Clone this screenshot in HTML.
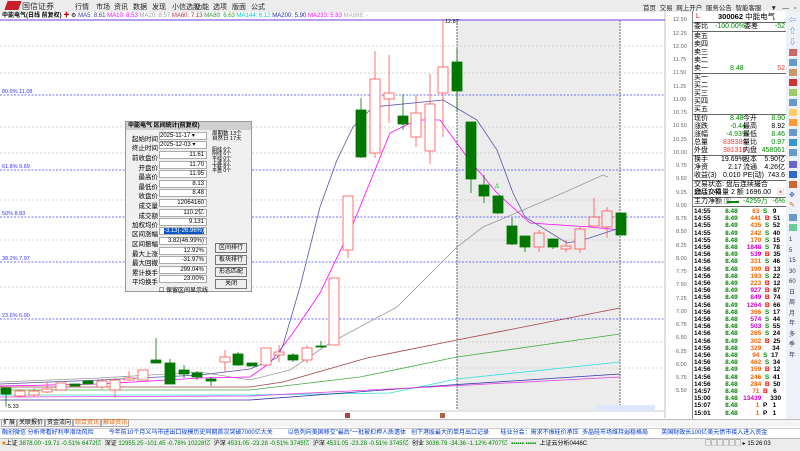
<!DOCTYPE html>
<html><head><meta charset="utf-8"><style>
*{margin:0;padding:0;box-sizing:border-box}
body{width:800px;height:451px;overflow:hidden;background:#fff;font-family:"Liberation Sans","Noto Sans CJK SC",sans-serif;font-size:7px;position:relative;color:#000}
.a{position:absolute;white-space:nowrap}
#top{position:absolute;left:0;top:0;width:800px;height:12px;background:#ececec}
#rp{position:absolute;left:692px;top:11px;width:94px;height:408px;background:#fff;border-left:1px solid #888;overflow:hidden}
.r{position:absolute;left:0;width:94px;height:8px;line-height:8px;font-size:7px}
.r span{position:absolute}
.sep{position:absolute;left:0;width:94px;border-top:1px solid #666}
#tb{position:absolute;left:786px;top:11px;width:14px;height:408px;background:#eef2f8}
.ic{position:absolute;left:3px;width:8px;height:7px}
#dlg{position:absolute;left:125px;top:121px;width:127px;height:171px;background:#f0f0f0;border:1px solid #999}
.lb{position:absolute;left:4px;width:28px;text-align:right;font-size:6.5px}
.fd{position:absolute;left:33px;width:48px;height:8px;background:#fff;border:1px solid #aaa;font-size:6px;text-align:right;padding-right:2px;line-height:7px}
.bt{position:absolute;left:89px;width:32px;height:10px;border:1px solid #777;background:#eee;font-size:6px;text-align:center;line-height:9px}
.nv{position:absolute;top:2px;font-size:7px;color:#222}
</style></head><body>
<div id="top"></div>
<div class="a" style="left:6px;top:1px;width:14px;height:9px;background:#c8202a;transform:skewX(-20deg)"></div>
<div class="a" style="left:22px;top:1px;font-size:8px;color:#333">国信证券</div>
<span class="nv" style="left:75px">行情</span><span class="nv" style="left:96px">市场</span><span class="nv" style="left:114px">资讯</span><span class="nv" style="left:133px">数据</span><span class="nv" style="left:152px">发现</span><span class="nv" style="left:172px">小信选股</span><span class="nv" style="left:195px">功能</span><span class="nv" style="left:213px">选项</span><span class="nv" style="left:232px">版面</span><span class="nv" style="left:251px">公式</span>
<div class="a" style="left:643px;top:2px;font-size:6.5px;color:#222">首页&nbsp; 交易&nbsp; 网上开户&nbsp; 服务公告&nbsp; 智能客服&nbsp;&nbsp;&nbsp;&nbsp; ▼&nbsp;&nbsp; —&nbsp;&nbsp; ▫&nbsp;&nbsp; ✕</div>
<div class="a" style="left:2px;top:13px;font-size:6px;line-height:6px"><b>中能电气(日线 前复权)</b> <span style="color:#c00">✚</span> ⚙ <span style="color:#333399">MA5: 8.61</span> <span style="color:#f0f">MA10: 8.53</span> <span style="color:#999">MA20: 8.57</span> <span style="color:#a33">MA60: 7.13</span> <span style="color:#393">MA89: 6.63</span> <span style="color:#0cc">MA144: 6.12</span> <span style="color:#229">MA200: 5.90</span> <span style="color:#f0f">MA233: 5.83</span> <span style="color:#aaa">MA888: -</span></div>

<svg class="a" style="left:0;top:0" width="692" height="420" viewBox="0 0 692 420">
<rect x="457" y="20" width="163" height="390" fill="#ececec"/>
<line x1="457" y1="20" x2="457" y2="410" stroke="#666" stroke-dasharray="2,1"/>
<line x1="620" y1="20" x2="620" y2="410" stroke="#666" stroke-dasharray="2,1"/>
<g stroke="#c8c8c8" stroke-dasharray="2,2" stroke-width="0.7">
<line x1="0" y1="46" x2="665" y2="46"/><line x1="0" y1="73" x2="665" y2="73"/><line x1="0" y1="127" x2="665" y2="127"/><line x1="0" y1="153" x2="665" y2="153"/><line x1="0" y1="200" x2="665" y2="200"/><line x1="0" y1="240" x2="665" y2="240"/><line x1="0" y1="287" x2="665" y2="287"/><line x1="0" y1="342" x2="665" y2="342"/><line x1="0" y1="368" x2="665" y2="368"/></g>
<g stroke="#4444ff" stroke-dasharray="2,1.5" stroke-width="0.8">
<line x1="0" y1="95" x2="665" y2="95"/><line x1="0" y1="170" x2="665" y2="170"/><line x1="0" y1="217" x2="665" y2="217"/><line x1="0" y1="262" x2="665" y2="262"/><line x1="0" y1="319" x2="665" y2="319"/></g>
<g font-size="5.5" fill="#3333ff" font-family="Liberation Sans">
<text x="2" y="93">80.9% 11.08</text><text x="2" y="168">61.8% 9.69</text><text x="2" y="215">50% 8.83</text><text x="2" y="260">38.2% 7.97</text><text x="2" y="317">23.6% 6.90</text></g>
<line x1="0" y1="20" x2="665" y2="20" stroke="#8866ee" stroke-width="1.2"/>
<line x1="665" y1="12" x2="665" y2="418" stroke="#999" stroke-width="0.6"/>
<g fill="none" stroke-width="0.8">
<polyline stroke="#999" points="0,382 100,378 200,372 250,380 290,370 330,343 397,307 437,267 457,247 483,227 523,210 563,193 603,175 608,177"/>
<polyline stroke="#f0f" points="0,386 100,384 200,378 250,377 270,363 293,333 320,293 353,224 390,133 417,120 440,120 467,157 497,193 530,223 590,227 620,230"/>
<polyline stroke="#5555aa" points="0,384 100,380 200,375 250,369 277,358 283,345 300,287 320,207 337,160 353,127 373,107 443,100 477,120 497,150 513,193 525,217 567,243 583,240 620,228"/>
<polyline stroke="#a04040" points="0,387 250,387 283,382 367,358 457,340 620,308"/>
<polyline stroke="#44aa44" points="0,390 250,390 360,377 457,357 620,334"/>
<polyline stroke="#33dddd" points="0,395 250,395 390,393 457,379 620,362"/>
<polyline stroke="#3333aa" points="0,400 250,400 450,385 620,374"/>
<polyline stroke="#e040e0" points="0,397 250,396 450,386 620,377"/>
</g>
<g stroke="#ff5050" fill="none" stroke-width="0.8">
<line x1="20" y1="389" x2="20" y2="398"/><line x1="34" y1="388" x2="34" y2="397"/><line x1="47" y1="382" x2="47" y2="393"/><line x1="102" y1="379" x2="102" y2="389"/><line x1="115" y1="378" x2="115" y2="398"/><line x1="129" y1="371" x2="129" y2="381"/><line x1="225" y1="350" x2="225" y2="372"/><line x1="279" y1="345" x2="279" y2="362"/><line x1="307" y1="345" x2="307" y2="363"/><line x1="348" y1="250" x2="348" y2="258"/><line x1="375" y1="51" x2="375" y2="158"/><line x1="389" y1="55" x2="389" y2="123"/><line x1="416" y1="95" x2="416" y2="147"/><line x1="430" y1="74" x2="430" y2="164"/><line x1="443" y1="20" x2="443" y2="137"/><line x1="539" y1="230" x2="539" y2="252"/><line x1="566" y1="240" x2="566" y2="252"/><line x1="580" y1="227" x2="580" y2="253"/><line x1="594" y1="198" x2="594" y2="226"/><line x1="607" y1="207" x2="607" y2="238"/>
<rect x="15" y="391" width="10" height="5" fill="#fff"/><rect x="29" y="391" width="10" height="4" fill="#fff"/><rect x="42" y="389" width="10" height="3" fill="#fff"/><rect x="56" y="383" width="10" height="7" fill="#fff"/><rect x="97" y="381" width="10" height="6" fill="#fff"/><rect x="110" y="380" width="10" height="10" fill="#fff"/><rect x="124" y="378" width="10" height="2" fill="#fff"/><rect x="138" y="370" width="10" height="10" fill="#fff"/><rect x="220" y="357" width="10" height="5" fill="#fff"/><rect x="261" y="348" width="10" height="17" fill="#fff"/><rect x="274" y="352" width="10" height="3" fill="#fff"/><rect x="302" y="348" width="10" height="12" fill="#fff"/><rect x="329" y="278" width="10" height="67" fill="#fff"/><rect x="343" y="196" width="10" height="54" fill="#fff"/><rect x="370" y="79" width="10" height="74" fill="#fff"/><rect x="384" y="93" width="10" height="6" fill="#fff"/><rect x="411" y="113" width="10" height="24" fill="#fff"/><rect x="425" y="104" width="10" height="47" fill="#fff"/><rect x="438" y="67" width="10" height="26" fill="#fff"/><rect x="534" y="233" width="10" height="14" fill="#ececec"/><rect x="561" y="246" width="10" height="3" fill="#ececec"/><rect x="575" y="229" width="10" height="20" fill="#ececec"/><rect x="589" y="217" width="10" height="9" fill="#ececec"/><rect x="602" y="211" width="10" height="16" fill="#ececec"/>
</g>
<g stroke="#007800" fill="#007800" stroke-width="0.8">
<line x1="6" y1="388" x2="6" y2="407"/><line x1="156" y1="338" x2="156" y2="363"/><line x1="170" y1="359" x2="170" y2="384"/><line x1="184" y1="365" x2="184" y2="378"/><line x1="197" y1="371" x2="197" y2="380"/><line x1="211" y1="377" x2="211" y2="386"/><line x1="238" y1="352" x2="238" y2="366"/><line x1="293" y1="353" x2="293" y2="362"/><line x1="321" y1="341" x2="321" y2="348"/><line x1="361" y1="98" x2="361" y2="158"/><line x1="403" y1="94" x2="403" y2="130"/><line x1="457" y1="49" x2="457" y2="111"/><line x1="471" y1="122" x2="471" y2="193"/><line x1="484" y1="175" x2="484" y2="203"/><line x1="498" y1="196" x2="498" y2="214"/><line x1="512" y1="218" x2="512" y2="245"/><line x1="525" y1="236" x2="525" y2="252"/><line x1="553" y1="239" x2="553" y2="249"/>
<rect x="1" y="388" width="10" height="6"/><rect x="70" y="384" width="10" height="2"/><rect x="83" y="381" width="10" height="3"/><rect x="151" y="360" width="10" height="3"/><rect x="165" y="363" width="10" height="21"/><rect x="179" y="370" width="10" height="4"/><rect x="192" y="373" width="10" height="4"/><rect x="206" y="379" width="10" height="2"/><rect x="233" y="354" width="10" height="11"/><rect x="247" y="363" width="10" height="3"/><rect x="288" y="355" width="10" height="5"/><rect x="316" y="346" width="10" height="1"/><rect x="356" y="110" width="10" height="47"/><rect x="398" y="116" width="10" height="8"/><rect x="452" y="62" width="10" height="29"/><rect x="466" y="122" width="10" height="57"/><rect x="479" y="185" width="10" height="11"/><rect x="493" y="196" width="10" height="17"/><rect x="507" y="226" width="10" height="18"/><rect x="520" y="236" width="10" height="11"/><rect x="548" y="239" width="10" height="8"/><rect x="616" y="213" width="10" height="22"/>
</g>
<text x="445" y="23" font-size="5.5" fill="#000">12.87</text>
<text x="8" y="408" font-size="5.5" fill="#000">5.33</text>
<text x="495" y="188" font-size="6" fill="#2c2">Δ</text>
<g font-size="5.5" fill="#666" font-family="Liberation Sans">
<text x="673" y="21">12.50</text><text x="673" y="35">12.25</text><text x="673" y="48">12.00</text><text x="673" y="61">11.75</text><text x="673" y="74">11.50</text><text x="673" y="88">11.25</text><text x="673" y="101">11.00</text><text x="673" y="114">10.75</text><text x="673" y="127">10.50</text><text x="673" y="141">10.25</text><text x="673" y="154">10.00</text><text x="676" y="167">9.75</text><text x="676" y="180">9.50</text><text x="676" y="194">9.25</text><text x="676" y="207">9.00</text><text x="676" y="220">8.75</text><text x="676" y="233">8.50</text><text x="676" y="247">8.25</text><text x="676" y="260">8.00</text><text x="676" y="273">7.75</text><text x="676" y="286">7.50</text><text x="676" y="300">7.25</text><text x="676" y="313">7.00</text><text x="676" y="326">6.75</text><text x="676" y="339">6.50</text><text x="676" y="353">6.25</text><text x="676" y="366">6.00</text><text x="676" y="379">5.75</text><text x="676" y="392">5.50</text></g>
<line x1="0" y1="411" x2="665" y2="411" stroke="#999" stroke-width="0.6"/>
<rect x="345" y="413" width="5" height="5" fill="#a44"/>
<rect x="440" y="413" width="5" height="5" fill="#a64"/>
<rect x="595" y="405" width="60" height="6" fill="#dde8ff"/>
</svg>

<div id="dlg">
<div class="a" style="left:0;top:0;width:125px;height:8px;background:#cfcfcf;font-size:6px;line-height:8px;padding-left:2px"><b>中能电气 区间统计(前复权)</b></div>
<div class="lb" style="top:11px">起始时间</div><div class="fd" style="top:10px;text-align:left">2025-11-17 ▾</div>
<div class="lb" style="top:20px">终止时间</div><div class="fd" style="top:19px;text-align:left">2025-12-03 ▾</div>
<div class="lb" style="top:30px">前收盘价</div><div class="fd" style="top:29px">11.61</div>
<div class="lb" style="top:40px">开盘价</div><div class="fd" style="top:39px">11.70</div>
<div class="lb" style="top:49px">最高价</div><div class="fd" style="top:48px">11.95</div>
<div class="lb" style="top:59px">最低价</div><div class="fd" style="top:58px">8.13</div>
<div class="lb" style="top:68px">收盘价</div><div class="fd" style="top:67px">8.48</div>
<div class="lb" style="top:78px">成交量</div><div class="fd" style="top:77px">12064160</div>
<div class="lb" style="top:88px">成交额</div><div class="fd" style="top:87px">110.2亿</div>
<div class="lb" style="top:97px">加权均价</div><div class="fd" style="top:96px">9.131</div>
<div class="lb" style="top:106px">区间涨幅</div><div class="fd" style="top:105px;background:#fff"><span style="background:#0a56c8;color:#fff">-3.13(-26.96%)</span></div>
<div class="lb" style="top:116px">区间振幅</div><div class="fd" style="top:115px">3.82(46.99%)</div>
<div class="lb" style="top:126px">最大上涨</div><div class="fd" style="top:125px">12.92%</div>
<div class="lb" style="top:135px">最大回撤</div><div class="fd" style="top:134px">-31.97%</div>
<div class="lb" style="top:145px">累计换手</div><div class="fd" style="top:144px">299.04%</div>
<div class="lb" style="top:154px">平均换手</div><div class="fd" style="top:153px">23.00%</div>
<div class="a" style="left:33px;top:163px;font-size:6px">☐ 保留区间显示线</div>
<div class="a" style="left:86px;top:10px;font-size:5.5px;line-height:5px">周期数 13个<br>自然日 17天</div>
<div class="a" style="left:86px;top:26px;font-size:5px;line-height:4.3px">阳线 6个<br>阴线 6个<br>平线 0个<br>上涨 5个<br>下跌 8个<br>平盘 0个</div>
<div class="bt" style="top:121px">区间排行</div>
<div class="bt" style="top:133px">板块排行</div>
<div class="bt" style="top:145px">形态匹配</div>
<div class="bt" style="top:157px">关闭</div>
</div>

<div id="rp">
<div class="r" style="top:1px;height:10px;line-height:10px"><span style="left:3px;color:#f00">L</span><span style="left:25px;font-size:7.5px"><b>300062</b> 中能电气</span></div>
<div class="sep" style="top:11px"></div>
<div class="r" style="top:12px"><span style="left:1px">委比</span><span style="left:22px;color:#080">-100.00%</span><span style="left:51px">委差</span><span style="right:2px;color:#080">-52</span></div>
<div class="sep" style="top:20px"></div>
<div class="r" style="top:22px"><span style="left:1px">卖五</span></div>
<div class="r" style="top:30px"><span style="left:1px">卖四</span></div>
<div class="r" style="top:38px"><span style="left:1px">卖三</span></div>
<div class="r" style="top:46px"><span style="left:1px">卖二</span></div>
<div class="r" style="top:54px"><span style="left:1px">卖一</span><span style="left:37px;color:#080">8.48</span><span style="right:2px;color:#f33">52</span></div>
<div class="sep" style="top:62px"></div>
<div class="r" style="top:63px"><span style="left:1px">买一</span></div>
<div class="r" style="top:71px"><span style="left:1px">买二</span></div>
<div class="r" style="top:79px"><span style="left:1px">买三</span></div>
<div class="r" style="top:87px"><span style="left:1px">买四</span></div>
<div class="r" style="top:95px"><span style="left:1px">买五</span></div>
<div class="sep" style="top:103px"></div>
<div class="r" style="top:104px"><span style="left:1px">现价</span><span style="left:37px;color:#080">8.48</span><span style="left:50px">今开</span><span style="right:2px;color:#080">8.90</span></div>
<div class="r" style="top:112px"><span style="left:1px">涨跌</span><span style="left:37px;color:#080">-0.44</span><span style="left:50px">最高</span><span style="right:2px">8.92</span></div>
<div class="r" style="top:120px"><span style="left:1px">涨幅</span><span style="left:33px;color:#080">-4.93%</span><span style="left:50px">最低</span><span style="right:2px;color:#080">8.46</span></div>
<div class="r" style="top:128px"><span style="left:1px">总量</span><span style="left:30px;color:#f33">839380</span><span style="left:50px">量比</span><span style="right:2px;color:#080">0.97</span></div>
<div class="r" style="top:136px"><span style="left:1px">外盘</span><span style="left:30px;color:#f33">381319</span><span style="left:50px">内盘</span><span style="right:2px;color:#080">458061</span></div>
<div class="sep" style="top:144px"></div>
<div class="r" style="top:145px"><span style="left:1px">换手</span><span style="left:28px">19.69%</span><span style="left:50px">股本</span><span style="right:2px">5.90亿</span></div>
<div class="r" style="top:153px"><span style="left:1px">净资</span><span style="left:35px">2.17</span><span style="left:50px">流通</span><span style="right:2px">4.26亿</span></div>
<div class="r" style="top:161px"><span style="left:1px">收益(3)</span><span style="left:30px">0.010</span><span style="left:50px">PE(动)</span><span style="right:2px">743.6</span></div>
<div class="sep" style="top:169px"></div>
<div class="r" style="top:170px"><span style="left:1px">交易状态: 盘后连续撮合 15:17:45</span></div>
<div class="r" style="top:178px"><span style="left:1px">盘后交易量 2 额 1696.00</span><span style="right:3px;color:#e66">▣</span></div>
<div class="sep" style="top:186px"></div>
<div class="r" style="top:187px"><span style="left:1px">主力净额 ▥</span><span style="left:34px;top:3px;width:12px;height:2px;background:#080"></span><span style="left:50px;color:#080">-4259万</span><span style="right:2px;color:#080">-6%</span></div>
<div class="sep" style="top:195px"></div>
<div id="tl" class="a" style="left:1px;top:197px;font-size:6.5px;line-height:7.2px;font-weight:bold">
<pre style="font-family:'Liberation Sans',sans-serif;font-size:6.5px;line-height:7.2px">14:55        <span style="color:#080">8.48</span>        <span style="color:#e60">63</span>  <span style="color:#080">S</span>   9
14:55        <span style="color:#080">8.49</span>       <span style="color:#e60">441</span>  <span style="color:#f00">B</span>  51
14:55        <span style="color:#080">8.49</span>       <span style="color:#e60">435</span>  <span style="color:#080">S</span>  52
14:55        <span style="color:#080">8.49</span>       <span style="color:#e60">242</span>  <span style="color:#080">S</span>  40
14:55        <span style="color:#080">8.48</span>       <span style="color:#e60">170</span>  <span style="color:#080">S</span>  15
14:56        <span style="color:#080">8.48</span>     <span style="color:#c0c">1848</span>  <span style="color:#080">S</span>  78
14:56        <span style="color:#080">8.49</span>       <span style="color:#c0c">539</span>  <span style="color:#f00">B</span>  35
14:56        <span style="color:#080">8.48</span>       <span style="color:#e60">331</span>  <span style="color:#080">S</span>  46
14:56        <span style="color:#080">8.48</span>       <span style="color:#e60">190</span>  <span style="color:#f00">B</span>  13
14:56        <span style="color:#080">8.48</span>       <span style="color:#e60">193</span>  <span style="color:#080">S</span>  22
14:56        <span style="color:#080">8.49</span>       <span style="color:#e60">223</span>  <span style="color:#f00">B</span>  12
14:56        <span style="color:#080">8.49</span>       <span style="color:#c0c">927</span>  <span style="color:#f00">B</span>  87
14:56        <span style="color:#080">8.49</span>       <span style="color:#c0c">849</span>  <span style="color:#f00">B</span>  74
14:56        <span style="color:#080">8.49</span>     <span style="color:#c0c">1264</span>  <span style="color:#f00">B</span>  66
14:56        <span style="color:#080">8.48</span>       <span style="color:#e60">366</span>  <span style="color:#080">S</span>  17
14:56        <span style="color:#080">8.48</span>       <span style="color:#c0c">574</span>  <span style="color:#080">S</span>  44
14:56        <span style="color:#080">8.48</span>       <span style="color:#c0c">503</span>  <span style="color:#080">S</span>  55
14:56        <span style="color:#080">8.48</span>       <span style="color:#e60">265</span>  <span style="color:#080">S</span>  24
14:56        <span style="color:#080">8.49</span>       <span style="color:#e60">302</span>  <span style="color:#f00">B</span>  25
14:56        <span style="color:#080">8.48</span>       <span style="color:#e60">329</span>      34
14:56        <span style="color:#080">8.48</span>        <span style="color:#e60">94</span>  <span style="color:#080">S</span>  17
14:56        <span style="color:#080">8.48</span>       <span style="color:#e60">462</span>  <span style="color:#080">S</span>  34
14:56        <span style="color:#080">8.49</span>       <span style="color:#e60">159</span>  <span style="color:#f00">B</span>  12
14:56        <span style="color:#080">8.48</span>       <span style="color:#e60">246</span>  <span style="color:#080">S</span>  41
14:56        <span style="color:#080">8.48</span>       <span style="color:#e60">284</span>  <span style="color:#f00">B</span>  50
14:57        <span style="color:#080">8.48</span>        <span style="color:#e60">71</span>  <span style="color:#f00">B</span>   6
15:00        <span style="color:#080">8.48</span>   <span style="color:#c0c">13439</span>     330
15:07        <span style="color:#080">8.48</span>          <span style="color:#e60">1</span>  P   1
15:01        <span style="color:#080">8.48</span>          <span style="color:#e60">1</span>  P   1</pre>
</div>
</div>

<div id="tb">
<div class="ic" style="top:4px;color:#36c;font-size:7px">⇦</div>
<div class="ic" style="top:15px;color:#36c;font-size:7px">⇧</div>
<div class="ic" style="top:26px;color:#36c;font-size:7px">⇩</div>
<div class="ic" style="top:38px;background:#c66"></div>
<div class="ic" style="top:48px;background:#69c"></div>
<div class="ic" style="top:58px;background:#c96"></div>
<div class="ic" style="top:68px;background:#c33"></div>
<div class="ic" style="top:78px;background:#9c6"></div>
<div class="ic" style="top:88px;background:#69c"></div>
<div class="ic" style="top:98px;background:#fc6"></div>
<div class="ic" style="top:108px;background:#f93"></div>
<div class="ic" style="top:118px;background:#69c"></div>
<div class="ic" style="top:128px;background:#39c"></div>
<div class="ic" style="top:138px;background:#69c"></div>
<div class="ic" style="top:150px;background:#66c"></div>
<div class="ic" style="top:160px;background:#36c"></div>
<div class="ic" style="top:170px;background:#c63"></div>
<div class="ic" style="top:180px;color:#36c">✥</div>
<div class="ic" style="top:190px;color:#c60">✎</div>
<div class="ic" style="top:203px;background:#69c"></div>
<div class="ic" style="top:213px;background:#6c9"></div>
<div class="a" style="left:3px;top:224px;font-size:6px;line-height:10.5px;color:#335">1<br>5<br>15<br>30<br>60<br>日<br>周<br>月<br>年<br>多<br>季<br>年</div>
</div>

<div class="a" style="left:0;top:419px;width:800px;height:8px;background:#f4f4f4;border-top:1px solid #bbb"></div>
<div class="a" style="left:1px;top:420px;font-size:6px;line-height:7px"><span style="border:1px solid #aaa;padding:0 1px">扩展</span><span style="border:1px solid #aaa;padding:0 1px">关联报价</span><span style="border:1px solid #aaa;padding:0 1px">资金流向</span><span style="border:1px solid #aaa;padding:0 1px;color:#e60">综合资讯</span><span style="border:1px solid #aaa;padding:0 1px;color:#e60">解译资讯</span></div>
<div class="a" style="left:0;top:428px;width:800px;height:10px;background:#fff;border-top:1px solid #ccc;overflow:hidden">
<div class="a" style="left:2px;top:0;font-size:6px;color:#0033cc;line-height:9px">融创微信 分析师看好利率滑动风险&nbsp;&nbsp;&nbsp;&nbsp;&nbsp;&nbsp;&nbsp;&nbsp; 今年前10个月义乌市进出口规模历史同期首次突破7000亿大关&nbsp;&nbsp;&nbsp;&nbsp;&nbsp;&nbsp;&nbsp;&nbsp; 以色列向美国移交"最后"一批被扣押人质遗体&nbsp;&nbsp; 创下港股最大的单月出口记录&nbsp;&nbsp;&nbsp;&nbsp;&nbsp;&nbsp; 硅业分会：需求不振硅价承压&nbsp; 多晶硅市场维持弱稳格局&nbsp;&nbsp;&nbsp;&nbsp;&nbsp;&nbsp;&nbsp; 英国财政长100亿美元债市接入进入资金</div></div>
<div class="a" style="left:0;top:438px;width:800px;height:13px;background:#ececec;border-top:1px solid #bbb;overflow:hidden">
<div class="a" style="left:2px;top:2px;font-size:6px;line-height:7px"><span style="color:#e80">■</span>上证 <span style="color:#080">3878.00 -19.71 -0.51% 6472亿</span>&nbsp; 深证 <span style="color:#080">12955.25 -101.45 -0.78% 10228亿</span>&nbsp; 沪深 <span style="color:#080">4531.05 -23.28 -0.51% 3745亿</span>&nbsp; 沪深 <span style="color:#080">4531.05 -23.28 -0.51% 3745亿</span>&nbsp; 创业 <span style="color:#080">3036.79 -34.36 -1.12% 4707亿</span>&nbsp; <span style="color:#080">▪▪▪▪▪▪</span> <span style="color:#080">▪▪▪▪▪</span>&nbsp; 上证云分析0446C</div>
<div class="a" style="left:705px;top:2px;font-size:6px;line-height:7px;background:#ececec">▢▢▢▢▢▢ ▸ 15:26:03</div></div>
</body></html>
